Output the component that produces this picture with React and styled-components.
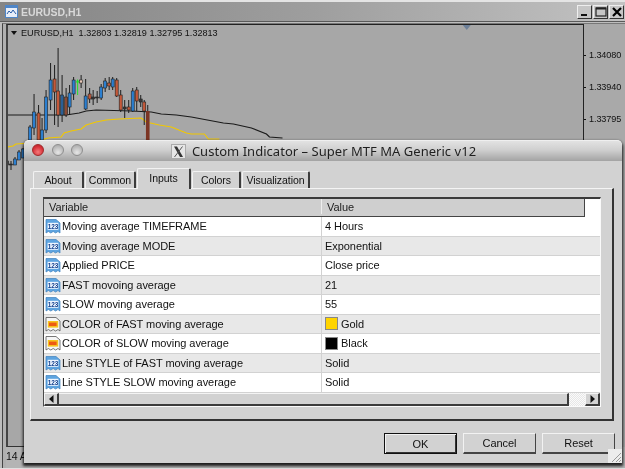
import React from "react";
import styled, { createGlobalStyle } from "styled-components";

const Global = createGlobalStyle`
  html, body { margin: 0; padding: 0; background: #c8c8c8; overflow: hidden; }
  * { box-sizing: border-box; }
`;

const Page = styled.div`
  position: relative;
  width: 625px;
  height: 469px;
  overflow: hidden;
  background: #bdbdbd;
  font-family: "Liberation Sans", "Noto Sans", sans-serif;
  font-size: 11px;
  letter-spacing: -0.05px;
  color: #111;
  filter: blur(0.3px);
`;

/* background MT4 chart window */
const ChartWindow = styled.div`
  display: flex;
  flex-direction: column;
  width: 625px;
  height: 469px;
  border-top: 2px solid #e4e4e4;
  border-bottom: 1px solid #e0e0e0;
`;
const ChartTitleBar = styled.div`
  flex: none;
  display: flex;
  align-items: center;
  height: 20px;
  padding: 0 1px 0 5px;
  gap: 3px;
  background: linear-gradient(90deg, #858585 0%, #9e9e9e 50%, #c2c2c2 100%);
  border-bottom: 1px solid #5a5a5a;
`;
const ChartTitle = styled.span`
  flex: 1;
  font-family: "Liberation Sans", sans-serif;
  font-weight: 700;
  font-size: 10.5px;
  color: #d8d8d8;
`;
const WinButtons = styled.div`
  display: flex;
  gap: 1px;
`;
const WinButton = styled.div`
  width: 15px;
  height: 14px;
  display: flex;
  align-items: center;
  justify-content: center;
  background: #c6c6c6;
  border: 1px solid;
  border-color: #eee #333 #333 #eee;
`;
const ChartBody = styled.div`
  flex: 1;
  display: flex;
  flex-direction: column;
  min-height: 0;
  margin: 1px 0 0 2px;
  padding-left: 3px;
  border-left: 1px solid #444;
  border-top: 1px solid #777;
  background: #b0b0b0;
`;
const ChartRow = styled.div`
  display: flex;
  height: 423px;
  flex: none;
`;
const ChartCanvas = styled.div`
  position: relative;
  flex: none;
  width: 578px;
  background: #a7a7a7;
  border: 1px solid #222;
  border-bottom-color: #333;
  border-left-width: 2px;
  border-left-color: #444;
`;
const Legend = styled.div`
  position: absolute;
  left: 3px;
  top: 1px;
  display: flex;
  align-items: center;
  gap: 4px;
  font-family: "Liberation Sans", sans-serif;
  font-size: 9.1px;
  letter-spacing: 0;
  color: #111;
  white-space: pre;
  height: 14px;
`;
const LegendArrow = styled.i`
  width: 0;
  height: 0;
  border-left: 3.5px solid transparent;
  border-right: 3.5px solid transparent;
  border-top: 4px solid #111;
`;
const CandleSvg = styled.svg`
  display: block;
  width: 100%;
  height: 100%;
`;
const PriceAxis = styled.div`
  flex: 1;
  display: flex;
  flex-direction: column;
  gap: 16px;
  padding: 23px 0 0 0;
  background: #a9a9a9;
`;
const PriceLabel = styled.div`
  display: flex;
  align-items: center;
  gap: 3px;
  height: 16px;
  font-family: "Liberation Sans", sans-serif;
  font-size: 9.1px;
  letter-spacing: -0.1px;
  color: #111;
  &::before {
    content: "";
    width: 2px;
    height: 1px;
    background: #111;
  }
`;
const TimeAxis = styled.div`
  flex: 1;
  padding: 3px 0 0 0;
  font-family: "Liberation Sans", sans-serif;
  font-size: 10.5px;
  color: #111;
  background: #b4b4b4;
`;

/* dialog */
const Dialog = styled.div`
  position: absolute;
  left: 24px;
  top: 140px;
  width: 598px;
  height: 323px;
  display: flex;
  flex-direction: column;
  background: #d2d2d2;
  border-radius: 5px 5px 0 0;
  box-shadow: 0 2px 3px 1px rgba(0, 0, 0, 0.85);
`;
const DialogTitle = styled.div`
  position: relative;
  flex: none;
  height: 21px;
  display: flex;
  align-items: center;
  justify-content: center;
  gap: 6px;
  padding: 0 0 0 1px;
  background: linear-gradient(180deg, #e2e2e2 0%, #cfcfcf 45%, #a3a3a3 100%);
  border-radius: 5px 5px 0 0;
  border-top: 1px solid #efefef;
`;
const TitleText = styled.span`
  font-family: "Noto Sans", sans-serif;
  font-size: 13px;
  letter-spacing: 0.03px;
  color: #1f1f1f;
  white-space: nowrap;
`;
const Lights = styled.div`
  position: absolute;
  left: 8px;
  top: 3px;
  display: flex;
  gap: 7.5px;
`;
const Light = styled.div`
  width: 12px;
  height: 12px;
  border-radius: 50%;
  border: 1px solid ${(p) => (p.$red ? "#a02a2a" : "#8e8e8e")};
  background: ${(p) =>
    p.$red
      ? "radial-gradient(circle at 50% 70%, #f47a7a 0%, #d8323a 60%, #b02028 100%)"
      : "radial-gradient(circle at 50% 75%, #e6e6e6 0%, #bdbdbd 60%, #a2a2a2 100%)"};
`;
const Tabs = styled.div`
  flex: none;
  display: flex;
  align-items: flex-end;
  height: 27px;
  padding-left: 9px;
  gap: 1px;
  position: relative;
  z-index: 1;
`;
const Tab = styled.div`
  display: flex;
  align-items: center;
  justify-content: center;
  width: ${(p) => p.$w}px;
  height: ${(p) => (p.$active ? 21 : 17)}px;
  margin-bottom: ${(p) => (p.$active ? -1 : 0)}px;
  background: #d2d2d2;
  border-style: solid;
  border-width: 1px 2px 0 1px;
  border-color: #f2f2f2 #3c3c3c #d2d2d2 #f2f2f2;
  border-radius: 2px 2px 0 0;
  font-size: 10.5px;
  padding-bottom: ${(p) => (p.$active ? 2 : 0)}px;
`;
const TabPanel = styled.div`
  flex: none;
  height: 233px;
  margin: 0 8px 0 6px;
  padding: 8px 11px 12px 12px;
  border-style: solid;
  border-width: 1px 2px 2px 1px;
  border-color: #f4f4f4 #333 #333 #f4f4f4;
`;
const Table = styled.div`
  height: 100%;
  display: flex;
  flex-direction: column;
  background: #fff;
  border-style: solid;
  border-width: 2px 1px 1px 1px;
  border-color: #3a3a3a #fafafa #fafafa #4a4a4a;
`;
const HeaderRow = styled.div`
  flex: none;
  display: flex;
  height: 18px;
  padding-bottom: 2px;
  width: 541px;
  background: #cfcfcf;
  border-bottom: 1px solid #444;
  border-right: 1px solid #444;
`;
const HeaderCell = styled.div`
  display: flex;
  align-items: center;
  width: ${(p) => p.$w};
  flex: ${(p) => (p.$w ? "none" : 1)};
  padding-left: 5px;
  border-right: ${(p) => (p.$w ? "1px solid #eee" : "0")};
  color: #222;
`;
const Rows = styled.div`
  flex: none;
  display: flex;
  flex-direction: column;
`;
const Row = styled.div`
  display: flex;
  height: 19.5px;
  background: ${(p) => (p.$alt ? "#e8e8e8" : "#fff")};
  border-bottom: 1px solid #d2d2d2;
`;
const NameCell = styled.div`
  flex: none;
  width: 278px;
  display: flex;
  align-items: center;
  gap: 1px;
  padding-left: 1px;
  border-right: 1px solid #d2d2d2;
  white-space: nowrap;
`;
const ValueCell = styled.div`
  flex: 1;
  display: flex;
  align-items: center;
  gap: 3px;
  padding-left: 3px;
`;
const Swatch = styled.i`
  flex: none;
  width: 13px;
  height: 13px;
  background: ${(p) => p.$c};
  border: 1px solid #888;
`;
const Scrollbar = styled.div`
  flex: 1;
  display: flex;
  align-items: stretch;
  background: #d2d2d2;
`;
const ScrollButton = styled.div`
  flex: none;
  width: 15px;
  display: flex;
  align-items: center;
  justify-content: center;
  background: #d2d2d2;
  border-style: solid;
  border-width: 1px 2px 2px 1px;
  border-color: #f4f4f4 #3c3c3c #3c3c3c #f4f4f4;
`;
const ScrollTrack = styled.div`
  flex: 1;
  background: #d2d2d2;
  border-style: solid;
  border-width: 1px 2px 2px 0;
  border-color: #f4f4f4 #3c3c3c #3c3c3c;
`;
const ScrollDither = styled.div`
  flex: none;
  width: 16px;
  background: repeating-conic-gradient(#e6e6e6 0 25%, #fafafa 0 50%) 0 0 / 2px 2px;
`;
const Footer = styled.div`
  flex: 1;
  display: flex;
  justify-content: flex-end;
  gap: 6px;
  padding: 12px 7px 0 0;
`;
const Button = styled.div`
  width: 73px;
  height: 21px;
  display: flex;
  align-items: center;
  justify-content: center;
  background: #d2d2d2;
  border-style: solid;
  border-width: ${(p) => (p.$primary ? "1px" : "1px 1px 2px 1px")};
  border-color: ${(p) =>
    p.$primary ? "#111" : "#f2f2f2 #444 #444 #f2f2f2"};
  box-shadow: ${(p) =>
    p.$primary ? "inset 1px 1px 0 #f2f2f2, inset -1px -1px 0 #333" : "none"};
`;
const Grip = styled.svg`
  position: absolute;
  right: 0;
  bottom: 0;
  width: 14px;
  height: 14px;
`;

const W = "#1d1d1d", B = "#2b7fd0", O = "#c4593a", D = "#3a3a3a";
/* x, wickTop, wickBottom, bodyTop, bodyBottom, colour */
const candles = [
  [6, 158, 168, 161, 165, D], [10, 161, 170, 164, 165, D], [14, 157, 165, 159, 165, B],
  [18, 150, 160, 152, 160, B], [22, 148, 158, 149, 158, B],
  [29, 125, 140, 127, 140, B], [33, 94, 135, 112, 128, B], [37.5, 105, 140, 113, 140, O],
  [41, 118, 140, 130, 140, B], [45, 90, 133, 97, 130, B], [49.5, 63, 110, 80, 100, B],
  [53.5, 65, 125, 79, 92, O], [57, 48, 127, 91, 115, O], [61, 75, 122, 95, 115, "#2a5f96"],
  [65, 88, 117, 97, 115, "#8a4a35"], [68.5, 85, 115, 93, 107, B], [72.5, 77, 100, 80, 94, B],
  [80, 75, 88, 80, 83, "#e8c8b8"], [84.5, 79, 110, 96, 109, B], [88.5, 88, 103, 94, 99, O],
  [92, 90, 105, 97, 99, D], [96, 91, 103, 97, 98, D], [100, 84, 100, 87, 98, B],
  [104, 78, 92, 81, 88, B], [108, 77, 90, 83, 86, O], [111.5, 77, 90, 79, 87, B],
  [115.5, 78, 97, 80, 96, O], [119.5, 90, 112, 95, 110, O], [123.5, 100, 118, 107, 109, D],
  [127.5, 100, 113, 107, 110, O], [131.5, 88, 112, 91, 111, B], [135.5, 87, 111, 90, 101, O],
  [139.5, 95, 107, 99, 102, D], [143, 100, 125, 102, 111, O],
];

const blackLine =
  "6,115 65,115 78,113 85,111 95,110 130,111 150,112 160,114 175,115 190,117 222,123 232,124 250,128 265,134 268,137 281,138";
const goldLine =
  "6,147 12,146 15,144 30,143 47,138 60,137 63,133 70,131 80,129 85,125 95,122 105,120 118,119 140,118 145,122 158,125 170,127 185,133 190,134 203,134 207,139 218,139";

const RowIcon = ({ kind }) =>
  kind === "num" ? (
    <svg width="16" height="16" viewBox="0 0 16 16" style={{ flex: "none" }}>
      <path d="M1 1.5H11L15 5V15l-2-1.5-2.4 1.5-2.4-1.5L5.8 15 3.4 13.5 1 15Z" fill="#5da4e0" stroke="#3e7fbb" strokeWidth=".7" />
      <rect x="2.6" y="4.8" width="10.8" height="7" fill="#eef5ff" />
      <text x="8" y="10.6" textAnchor="middle" fontFamily="Liberation Sans" fontWeight="700" fontSize="6.4" fill="#123f8c">123</text>
    </svg>
  ) : (
    <svg width="16" height="16" viewBox="0 0 16 16" style={{ flex: "none" }}>
      <path d="M1 1.5H11L15 5V15l-2-1.5-2.4 1.5-2.4-1.5L5.8 15 3.4 13.5 1 15Z" fill="#f6f6f6" stroke="#555" strokeWidth=".8" />
      <rect x="2.8" y="5" width="10.4" height="6.6" fill="#f6c21c" />
      <rect x="4" y="6.6" width="7.6" height="3.4" fill="#ee5a12" />
    </svg>
  );

const rows = [
  ["num", "Moving average TIMEFRAME", "4 Hours"],
  ["num", "Moving average MODE", "Exponential"],
  ["num", "Applied PRICE", "Close price"],
  ["num", "FAST movoing average", "21"],
  ["num", "SLOW moving average", "55"],
  ["color", "COLOR of FAST moving average", "Gold", "#ffd400"],
  ["color", "COLOR of SLOW moving average", "Black", "#000"],
  ["num", "Line STYLE of FAST moving average", "Solid"],
  ["num", "Line STYLE SLOW moving average", "Solid"],
];

const tabs = [
  ["About", 51], ["Common", 51], ["Inputs", 54], ["Colors", 49], ["Visualization", 68],
];

export default function App() {
  return (
    <Page>
      <Global />
      <ChartWindow>
        <ChartTitleBar>
          <svg width="13" height="13" viewBox="0 0 13 13">
            <rect x=".5" y=".5" width="12" height="12" fill="#e8eef8" stroke="#4f86c8" />
            <path d="M0 0H13V3H0Z" fill="#4f86c8" />
            <path d="M2 9l2-3 2 2 2-3 3 4" fill="none" stroke="#2a5da8" />
          </svg>
          <ChartTitle>EURUSD,H1</ChartTitle>
          <WinButtons>
            <WinButton>
              <svg width="10" height="10" viewBox="0 0 10 10"><rect x="1" y="7" width="6" height="2" fill="#111" /></svg>
            </WinButton>
            <WinButton>
              <svg width="12" height="10" viewBox="0 0 12 10"><rect x="1" y="1" width="10" height="8" fill="none" stroke="#222" strokeWidth="1.2" /><rect x="1" y="0.5" width="10" height="2" fill="#222" /></svg>
            </WinButton>
            <WinButton>
              <svg width="10" height="10" viewBox="0 0 10 10"><path d="M1 1L9 9M9 1L1 9" stroke="#000" strokeWidth="2.2" /></svg>
            </WinButton>
          </WinButtons>
        </ChartTitleBar>
        <ChartBody>
          <ChartRow>
            <ChartCanvas>
              <CandleSvg viewBox="7 25 574 421" preserveAspectRatio="none">
                <path d="M461 25h8l-4 5Z" fill="#6d8099" />
                <polyline points={blackLine} fill="none" stroke="#1a1a1a" strokeWidth="1.2" />
                <polyline points={goldLine} fill="none" stroke="#f2c800" strokeWidth="1.2" />
                {candles.map(([x, a, b, t, e, c]) => (
                  <g key={x}>
                    <line x1={x} x2={x} y1={a} y2={b} stroke={W} strokeWidth="1" />
                    <rect x={x - 1.5} y={t} width="3" height={e - t} fill={c} stroke="#222" strokeWidth=".6" />
                  </g>
                ))}
                <line x1="146.5" x2="146.5" y1="105" y2="112" stroke={W} />
                <rect x="144.7" y="111" width="3.6" height="30" fill="#7c3524" />
                <path d="M76.5 95V81" stroke="#22e02a" strokeWidth="1" />
                <path d="M74.7 82.5L76.5 79l1.8 3.5Z" fill="#22e02a" />
              </CandleSvg>
              <Legend>
                <LegendArrow />
                <span>EURUSD,H1  1.32803 1.32819 1.32795 1.32813</span>
              </Legend>
            </ChartCanvas>
            <PriceAxis>
              <PriceLabel>1.34080</PriceLabel>
              <PriceLabel>1.33940</PriceLabel>
              <PriceLabel>1.33795</PriceLabel>
            </PriceAxis>
          </ChartRow>
          <TimeAxis>14 A</TimeAxis>
        </ChartBody>
      </ChartWindow>

      <Dialog>
        <DialogTitle>
          <Lights>
            <Light $red />
            <Light />
            <Light />
          </Lights>
          <svg width="15" height="15" viewBox="0 0 15 15" style={{ flex: "none" }}>
            <rect x=".5" y=".5" width="14" height="14" fill="#e6e6e6" stroke="#aaa" />
            <path d="M3 2.5h3L12 13H9Z" fill="#333" />
            <path d="M11.5 2.5L3.5 13" stroke="#555" strokeWidth="1" />
          </svg>
          <TitleText>Custom Indicator – Super MTF MA Generic v12</TitleText>
        </DialogTitle>
        <Tabs>
          {tabs.map(([t, w]) => (
            <Tab key={t} $w={w} $active={t === "Inputs"}>{t}</Tab>
          ))}
        </Tabs>
        <TabPanel>
          <Table>
            <HeaderRow>
              <HeaderCell $w="278px">Variable</HeaderCell>
              <HeaderCell>Value</HeaderCell>
            </HeaderRow>
            <Rows>
              {rows.map(([k, n, v, c], i) => (
                <Row key={n} $alt={i % 2 === 1}>
                  <NameCell><RowIcon kind={k} />{n}</NameCell>
                  <ValueCell>
                    {c && <Swatch $c={c} />}
                    {v}
                  </ValueCell>
                </Row>
              ))}
            </Rows>
            <Scrollbar>
              <ScrollButton>
                <svg width="5" height="8" viewBox="0 0 5 8"><path d="M4.5 0V8L0 4Z" fill="#111" /></svg>
              </ScrollButton>
              <ScrollTrack />
              <ScrollDither />
              <ScrollButton>
                <svg width="5" height="8" viewBox="0 0 5 8"><path d="M.5 0V8L5 4Z" fill="#111" /></svg>
              </ScrollButton>
            </Scrollbar>
          </Table>
        </TabPanel>
        <Footer>
          <Button $primary>OK</Button>
          <Button>Cancel</Button>
          <Button>Reset</Button>
        </Footer>
        <Grip viewBox="0 0 14 14">
          <rect width="14" height="14" fill="#ececec" />
          <path d="M13 4L4 13M13 8L8 13M13 11L11 13" stroke="#999" strokeWidth="1" />
        </Grip>
      </Dialog>
    </Page>
  );
}
